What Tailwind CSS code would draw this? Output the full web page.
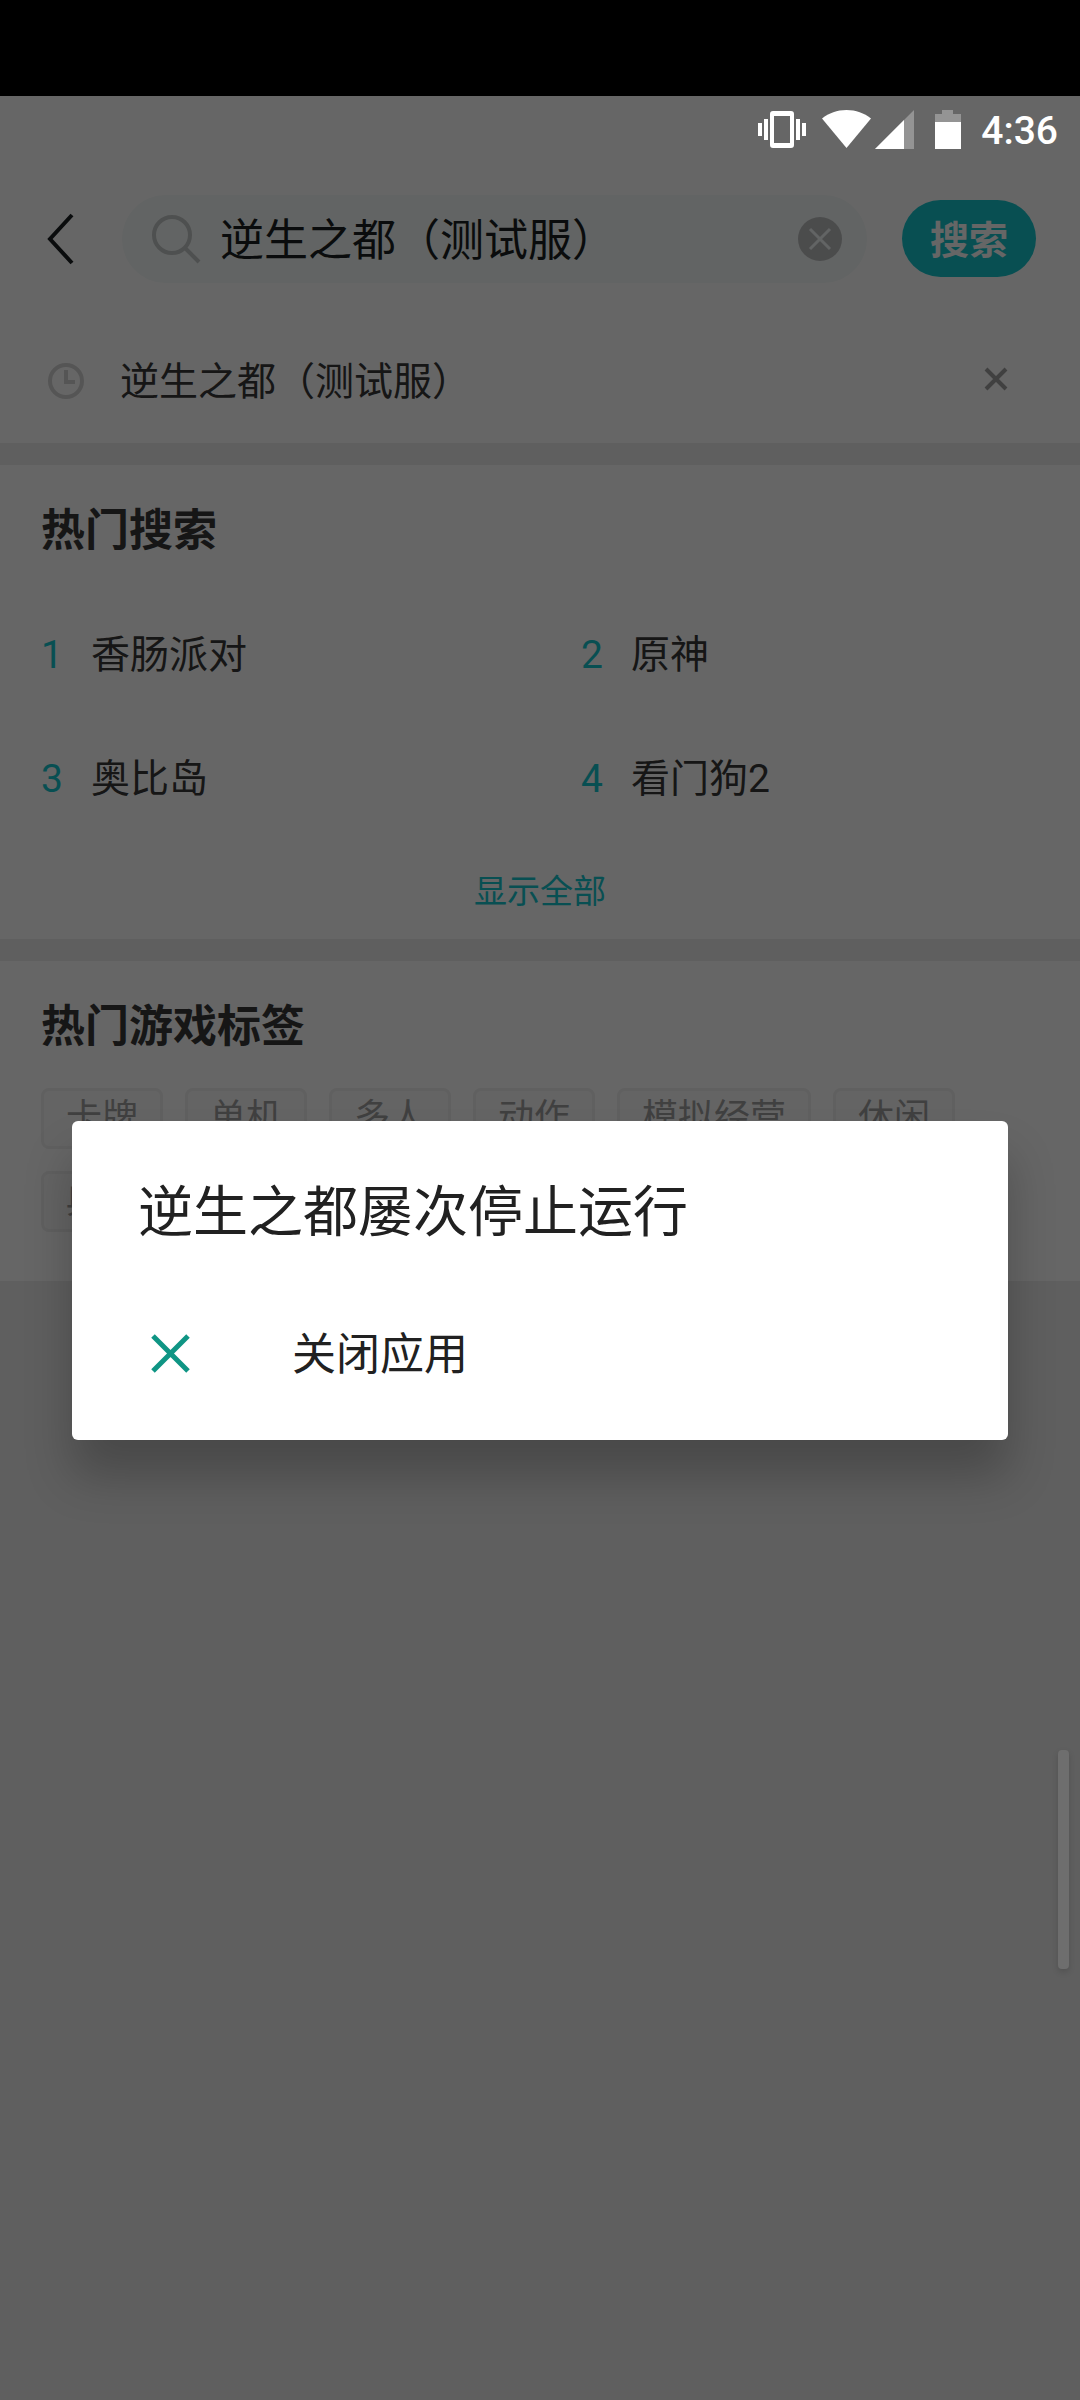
<!DOCTYPE html>
<html lang="zh-CN">
<head>
  <meta charset="UTF-8" />
  <meta name="viewport" content="width=device-width, initial-scale=1" />
  <title>搜索</title>
  <script src="https://cdn.jsdelivr.net/npm/@tailwindcss/browser@4"></script>
</head>
<body class="bg-black font-['Roboto','Noto_Sans_CJK_SC',sans-serif] text-[#383838]">

  <div class="relative mt-24 min-h-[calc(100vh-96px)] bg-[#ededed]">

    <!-- Status bar -->
    <div class="relative z-20 h-[66px] pt-0.5 flex items-center justify-end pr-[22px] text-white">
      <svg class="w-[50px] h-10 mr-[15px]" viewBox="0 0 50 40" fill="currentColor" aria-hidden="true">
        <path fill-rule="evenodd" d="M16 1h18a3 3 0 0 1 3 3v31a3 3 0 0 1-3 3H16a3 3 0 0 1-3-3V4a3 3 0 0 1 3-3zM17 6v27h16V6z" />
        <path d="M7 9h4v21H7zM1 13h4v13H1zM39 9h4v21h-4zM45 13h4v13h-4z" />
      </svg>
      <svg class="w-[49px] h-10 mr-1" viewBox="0 0 49 40" fill="currentColor" aria-hidden="true">
        <path d="M24.500 38L0 8.500C7 3 15 0 24.500 0S42 3 49 8.500z" />
      </svg>
      <svg class="w-10 h-10 mr-5" viewBox="0 0 40 40" fill="currentColor" aria-hidden="true">
        <path d="M39 0v39H0z" opacity=".3" />
        <path d="M29 10v29H0z" />
      </svg>
      <svg class="w-[26px] h-10 mr-5" viewBox="0 0 26 40" fill="currentColor" aria-hidden="true">
        <path d="M7 0h11v4h8v8H0V4h7z" opacity=".3" />
        <path d="M0 12h26v27H0z" />
      </svg>
      <span class="pt-0.5 text-[39px] leading-10 font-medium">4:36</span>
    </div>

    <!-- Search bar -->
    <header class="bg-white -mt-[66px] pt-[66px]">
      <form class="h-[153px] flex items-center pl-[42px] pr-11" onsubmit="return false;">
        <button type="button" aria-label="返回" class="w-20 h-20 shrink-0">
          <svg class="w-10 h-[52px]" viewBox="0 0 40 52" fill="none" stroke="#1b1f22" stroke-width="4" aria-hidden="true">
            <path d="M30 2L8 26l22 24" />
          </svg>
        </button>
        <div class="flex-1 min-w-0 h-[88px] rounded-full bg-[#f5faf9] flex items-center pl-7 pr-[25px]">
          <svg class="w-[52px] h-[52px] shrink-0" viewBox="0 0 52 52" fill="none" stroke="#c4c7c7" stroke-width="4" aria-hidden="true">
            <circle cx="22" cy="22" r="18" />
            <path d="M35 35l14 14" />
          </svg>
          <input type="text" aria-label="搜索" value="逆生之都（测试服）" class="flex-1 min-w-0 ml-[18px] pt-1 text-[44px] leading-[60px] text-[#1b1f22] bg-transparent outline-none" />
          <button type="button" aria-label="清空" class="shrink-0">
            <svg class="w-11 h-11" viewBox="0 0 44 44" aria-hidden="true">
              <circle cx="22" cy="22" r="22" fill="#bcbdbf" />
              <path d="M12 12l20 20M32 12L12 32" stroke="#f5faf9" stroke-width="3" />
            </svg>
          </button>
        </div>
        <button type="submit" class="ml-[35px] w-[134px] h-[77px] pt-1 shrink-0 rounded-full bg-[#15c5ce] text-white text-[39px] leading-[52px] font-bold">搜索</button>
      </form>

      <!-- History -->
      <div class="h-32 pt-1 flex items-center pl-[42px] pr-[60px]">
        <svg class="w-12 h-12 shrink-0" viewBox="0 0 48 48" fill="none" stroke="#d4d4d4" stroke-width="4" aria-hidden="true">
          <circle cx="24" cy="24" r="16" />
          <path d="M24 13v12h9" />
        </svg>
        <a href="#" class="flex-1 ml-[30px] pt-0.5 text-[39px] leading-[52px]">逆生之都（测试服）</a>
        <button type="button" aria-label="删除记录">
          <svg class="w-12 h-12" viewBox="0 0 48 48" fill="none" stroke="#a0a0a0" stroke-width="4" aria-hidden="true">
            <path d="M14 12l20 20M34 12L14 32" />
          </svg>
        </button>
      </div>
    </header>

    <!-- Hot searches -->
    <section class="mt-[22px] h-[474px] bg-white">
      <h2 class="px-[41px] pt-[35px] text-[44px] leading-[62px] font-bold">热门搜索</h2>
      <ol class="mt-[31px] grid grid-cols-2 text-[39px] leading-[124px]">
        <li class="flex pl-[41px]"><span class="w-[50px] text-[#15c5ce]">1</span><a href="#">香肠派对</a></li>
        <li class="flex pl-[41px]"><span class="w-[50px] text-[#15c5ce]">2</span><a href="#">原神</a></li>
        <li class="flex pl-[41px]"><span class="w-[50px] text-[#15c5ce]">3</span><a href="#">奥比岛</a></li>
        <li class="flex pl-[41px]"><span class="w-[50px] text-[#15c5ce]">4</span><a href="#">看门狗2</a></li>
      </ol>
      <button type="button" class="block mx-auto mt-7 text-[33px] leading-[46px] text-[#15c5ce]">显示全部</button>
    </section>

    <!-- Hot tags -->
    <section class="mt-[22px] pb-[49px] bg-white">
      <h2 class="px-[41px] pt-[35px] text-[44px] leading-[62px] font-bold">热门游戏标签</h2>
      <div class="mt-[30px] px-[41px] flex flex-wrap gap-[22px] text-[36px] leading-[55px] text-[#a0a0a0]">
        <a href="#" class="px-[22px] border-3 border-[#f0f0f0] bg-[#fafafa] rounded-lg">卡牌</a>
        <a href="#" class="px-[22px] border-3 border-[#f0f0f0] bg-[#fafafa] rounded-lg">单机</a>
        <a href="#" class="px-[22px] border-3 border-[#f0f0f0] bg-[#fafafa] rounded-lg">多人</a>
        <a href="#" class="px-[22px] border-3 border-[#f0f0f0] bg-[#fafafa] rounded-lg">动作</a>
        <a href="#" class="px-[22px] border-3 border-[#f0f0f0] bg-[#fafafa] rounded-lg">模拟经营</a>
        <a href="#" class="px-[22px] border-3 border-[#f0f0f0] bg-[#fafafa] rounded-lg">休闲</a>
        <a href="#" class="px-[22px] border-3 border-[#f0f0f0] bg-[#fafafa] rounded-lg">典</a>
      </div>
    </section>

    <!-- Dim layer + scroll thumb -->
    <div class="absolute inset-0 z-10 bg-black/60"></div>
    <div class="absolute z-20 right-[11px] top-[1654px] w-[11px] h-[219px] rounded-sm bg-[#6e6e6e] shadow-[0_3px_6px_rgba(0,0,0,0.15)]"></div>
  </div>

  <!-- Crash dialog -->
  <div class="absolute inset-0 z-30 flex items-center justify-center px-[72px] pt-[161px]">
    <div role="dialog" aria-labelledby="crash-title" class="w-full bg-white rounded-md pt-[52px] pb-[26px] text-[#212121] shadow-[0_36px_48px_rgba(0,0,0,0.24)]">
      <h1 id="crash-title" class="px-[66px] text-[55px] leading-[78px]">逆生之都屡次停止运行</h1>
      <button type="button" class="mt-[43px] w-full h-[120px] flex items-center pl-[66px] text-[44px]">
        <svg class="w-16 h-16" viewBox="0 0 64 64" fill="none" stroke="#0f9584" stroke-width="5" aria-hidden="true">
          <path d="M15 14l35 35M50 14L15 49" />
        </svg>
        <span class="ml-[90px] pt-0.5">关闭应用</span>
      </button>
    </div>
  </div>

</body>
</html>
